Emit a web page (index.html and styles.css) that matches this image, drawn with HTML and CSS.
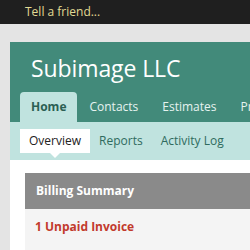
FILE: index.html
```html
<!DOCTYPE html>
<html>
<head>
<meta charset="utf-8">
<link rel="stylesheet" href="styles.css">
</head>
<body>
<div class="topbar">Tell a friend...</div>
<div class="page">
  <div class="brand">Subimage LLC</div>
  <div class="tabs">
    <div class="tab active">Home</div>
    <div class="tab">Contacts</div>
    <div class="tab">Estimates</div>
    <div class="tab">Projects</div>
  </div>
  <div class="subnav">
    <div class="sub active">Overview</div>
    <div class="sub">Reports</div>
    <div class="sub">Activity Log</div>
  </div>
  <div class="content">
    <div class="panel">
      <div class="panel-head">Billing Summary</div>
      <div class="panel-body">1 Unpaid Invoice</div>
    </div>
  </div>
</div>
</body>
</html>
```
FILE: styles.css
```css
html, body {
  margin: 0;
  padding: 0;
}
html {
  overflow: hidden;
}
body {
  background: #e4e4e4;
  font-family: "Open Sans", "DejaVu Sans", sans-serif;
  width: 250px;
  height: 250px;
  overflow: hidden;
}
.topbar {
  height: 24px;
  line-height: 24px;
  background: #1f1f1f;
  color: #e2da93;
  font-size: 12px;
  padding-left: 25px;
}
.page {
  margin: 18px 0 0 10px;
  background: #428a7a;
  overflow: hidden;
}
.brand {
  height: 50px;
  box-sizing: border-box;
  padding: 9px 0 0 21px;
  font-size: 23px;
  letter-spacing: -0.1px;
  line-height: 34px;
  color: #ffffff;
  white-space: nowrap;
}
.tabs {
  display: flex;
  height: 30px;
  padding-left: 10px;
}
.tab {
  flex: none;
  padding: 0 12px;
  line-height: 29px;
  font-size: 12px;
  color: #e6f3f0;
  white-space: nowrap;
}
.tab.active {
  padding: 0 11px;
  background: #c0e3df;
  color: #2b5f53;
  font-weight: bold;
  border-radius: 4px 4px 0 0;
}
.subnav {
  display: flex;
  align-items: center;
  height: 38px;
  background: #c0e3df;
  padding-left: 10px;
}
.sub {
  position: relative;
  flex: none;
  padding: 0 9px;
  height: 24px;
  line-height: 24px;
  font-size: 12px;
  color: #2f6b5e;
  white-space: nowrap;
}
.sub.active {
  background: #ffffff;
  color: #222222;
}
.sub.active::after {
  content: "";
  position: absolute;
  left: 30px;
  top: 24px;
  border-left: 5px solid transparent;
  border-right: 5px solid transparent;
  border-top: 5px solid #ffffff;
}
.content {
  background: #ffffff;
  padding: 13px 0 20px 15px;
}
.panel-head {
  height: 36px;
  line-height: 36px;
  background: #8a8a8a;
  color: #ffffff;
  font-size: 12px;
  font-weight: bold;
  padding-left: 11px;
}
.panel-body {
  background: #f4f4f4;
  padding: 9px 10px 20px;
  line-height: 18px;
  font-size: 12px;
  font-weight: bold;
  color: #c23a2c;
}
```
